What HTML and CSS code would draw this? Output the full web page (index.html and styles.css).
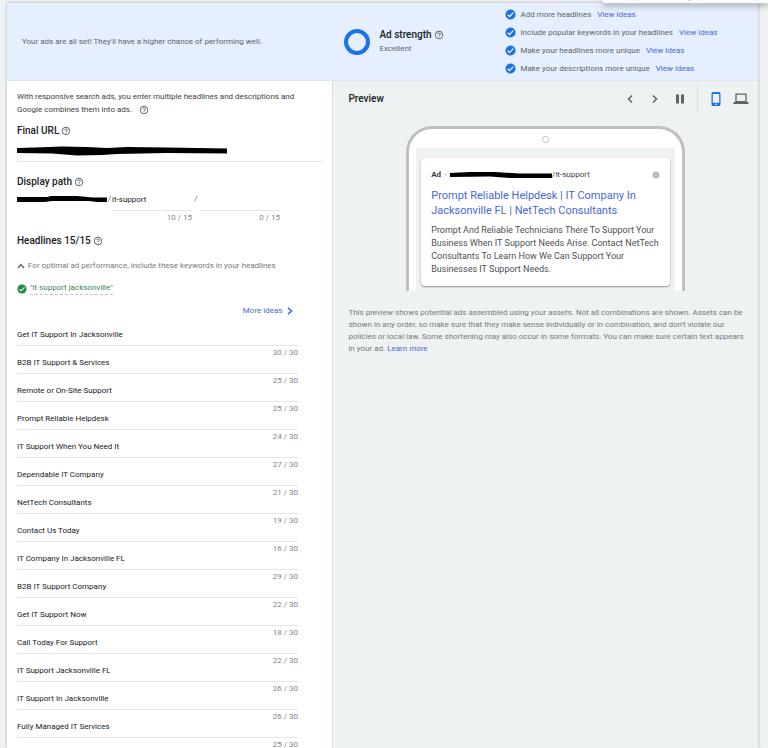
FILE: index.html
```
<!DOCTYPE html>
<html lang="en">
  <head>
    <meta charset="utf-8">
    <title>Responsive search ad</title>
    <link rel="stylesheet" href="styles.css">
  </head>
  <body>

<!-- shared icons -->
<svg class="sprite" width="0" height="0" aria-hidden="true">
  <symbol id="help" viewBox="0 0 24 24"><path fill="currentColor" d="M11 18h2v-2h-2v2zm1-16C6.480 2 2 6.480 2 12s4.480 10 10 10 10-4.480 10-10S17.520 2 12 2zm0 18c-4.410 0-8-3.590-8-8s3.590-8 8-8 8 3.590 8 8-3.590 8-8 8zm0-14c-2.210 0-4 1.790-4 4h2c0-1.100.9-2 2-2s2 .9 2 2c0 2-3 1.750-3 5h2c0-2.250 3-2.500 3-5 0-2.210-1.790-4-4-4z"/></symbol>
  <symbol id="check" viewBox="0 0 24 24"><circle cx="12" cy="12" r="11" fill="currentColor"/><path d="M6 12.500l4 4 8-8.500" fill="none" stroke="#fff" stroke-width="2.500"/></symbol>
</svg>

<div class="popup"><span class="popup-mark"></span></div>

<div class="editor">
  <header class="strength">
    <p class="strength-message">Your ads are all set! They'll have a higher chance of performing well.</p>
    <div class="strength-detail">
      <div class="meter">
        <svg class="ring" viewBox="0 0 28 28"><circle cx="14" cy="14" r="11" fill="none" stroke="#1a73e8" stroke-width="4"/></svg>
        <div>
          <h2 class="title">Ad strength <svg class="help"><use href="#help"/></svg></h2>
          <p class="rating">Excellent</p>
        </div>
      </div>
      <ul class="checklist">
        <li><svg class="check"><use href="#check"/></svg>Add more headlines <a href="#">View ideas</a></li>
        <li><svg class="check"><use href="#check"/></svg>Include popular keywords in your headlines <a href="#">View ideas</a></li>
        <li><svg class="check"><use href="#check"/></svg>Make your headlines more unique <a href="#">View ideas</a></li>
        <li><svg class="check"><use href="#check"/></svg>Make your descriptions more unique <a href="#">View ideas</a></li>
      </ul>
    </div>
  </header>

  <div class="columns">
    <form class="assets">
      <p class="intro">With responsive search ads, you enter multiple headlines and descriptions and Google combines them into ads. <svg class="help"><use href="#help"/></svg></p>

      <h2 class="title">Final URL <svg class="help"><use href="#help"/></svg></h2>
      <div class="final-url">
        <svg class="url-mark" viewBox="0 0 210 10" role="img" aria-label="Hidden URL"><path d="M0 2L18 1.500 45 0.500 70 1 90 2 110 1 150 1.500 180 2 210 2.500V7.500L150 7 100 8 85 9 60 9.500 35 7.500 0 7z"/></svg>
      </div>

      <h2 class="title">Display path <svg class="help"><use href="#help"/></svg></h2>
      <div class="path">
        <svg class="path-mark" viewBox="0 0 90 8" role="img" aria-label="Hidden domain"><path d="M0 2L30 2 34 1 60 1 76 2.500 90 2.500V7L80 7 72 6 35 6 28 7H0z"/></svg>
        <span class="slash">/</span>
        <div class="path-field">
          <input type="text" value="it-support" aria-label="Path 1">
          <span class="count">10 / 15</span>
        </div>
        <span class="slash">/</span>
        <div class="path-field">
          <input type="text" value="" aria-label="Path 2">
          <span class="count">0 / 15</span>
        </div>
      </div>

      <h2 class="title">Headlines 15/15 <svg class="help"><use href="#help"/></svg></h2>
      <button type="button" class="keywords-toggle">
        <svg class="caret" viewBox="0 0 8 6"><path d="M1 5l3-3.500L7 5" fill="none" stroke="#5f6368" stroke-width="1.300"/></svg>
        For optimal ad performance, include these keywords in your headlines
      </button>
      <div class="keyword"><svg class="check"><use href="#check"/></svg><span>"it support jacksonville"</span></div>
      <a class="more-ideas" href="#">More ideas
        <svg viewBox="0 0 6 8"><path d="M1 .8L4.500 4 1 7.200" fill="none" stroke="#4272db" stroke-width="1.600"/></svg>
      </a>

      <div class="headlines">
        <div class="headline"><input type="text" aria-label="Headline 1" value="Get IT Support In Jacksonville"><span class="count">30 / 30</span></div>
        <div class="headline"><input type="text" aria-label="Headline 2" value="B2B IT Support &amp; Services"><span class="count">25 / 30</span></div>
        <div class="headline"><input type="text" aria-label="Headline 3" value="Remote or On-Site Support"><span class="count">25 / 30</span></div>
        <div class="headline"><input type="text" aria-label="Headline 4" value="Prompt Reliable Helpdesk"><span class="count">24 / 30</span></div>
        <div class="headline"><input type="text" aria-label="Headline 5" value="IT Support When You Need It"><span class="count">27 / 30</span></div>
        <div class="headline"><input type="text" aria-label="Headline 6" value="Dependable IT Company"><span class="count">21 / 30</span></div>
        <div class="headline"><input type="text" aria-label="Headline 7" value="NetTech Consultants"><span class="count">19 / 30</span></div>
        <div class="headline"><input type="text" aria-label="Headline 8" value="Contact Us Today"><span class="count">16 / 30</span></div>
        <div class="headline"><input type="text" aria-label="Headline 9" value="IT Company In Jacksonville FL"><span class="count">29 / 30</span></div>
        <div class="headline"><input type="text" aria-label="Headline 10" value="B2B IT Support Company"><span class="count">22 / 30</span></div>
        <div class="headline"><input type="text" aria-label="Headline 11" value="Get IT Support Now"><span class="count">18 / 30</span></div>
        <div class="headline"><input type="text" aria-label="Headline 12" value="Call Today For Support"><span class="count">22 / 30</span></div>
        <div class="headline"><input type="text" aria-label="Headline 13" value="IT Support Jacksonville FL"><span class="count">26 / 30</span></div>
        <div class="headline"><input type="text" aria-label="Headline 14" value="IT Support In Jacksonville"><span class="count">26 / 30</span></div>
        <div class="headline"><input type="text" aria-label="Headline 15" value="Fully Managed IT Services"><span class="count">25 / 30</span></div>
      </div>
    </form>

    <section class="preview">
      <div class="preview-bar">
        <h2 class="title">Preview</h2>
        <div class="controls">
          <button type="button" aria-label="Previous"><svg viewBox="0 0 16 16"><path d="M10 4.500L6.500 8l3.500 3.500" fill="none" stroke="currentColor" stroke-width="1.500"/></svg></button>
          <button type="button" aria-label="Next"><svg viewBox="0 0 16 16"><path d="M6 4.500L9.500 8 6 11.500" fill="none" stroke="currentColor" stroke-width="1.500"/></svg></button>
          <button type="button" aria-label="Pause"><svg viewBox="0 0 16 16"><path d="M4 3.500h3v9H4zM9 3.500h3v9H9z" fill="currentColor"/></svg></button>
        </div>
        <div class="devices">
          <button type="button" class="active" aria-label="Mobile"><svg viewBox="0 0 16 16"><path fill="currentColor" fill-rule="evenodd" d="M5 1h6a1.500 1.500 0 0 1 1.500 1.500v11A1.500 1.500 0 0 1 11 15H5a1.500 1.500 0 0 1-1.500-1.500v-11A1.500 1.500 0 0 1 5 1zM4.800 3v8.800h6.400V3z"/><path d="M7 13.300h2" stroke="#fff" stroke-width=".8"/></svg></button>
          <button type="button" aria-label="Desktop"><svg viewBox="0 0 16 16"><path d="M3 3.200h10v7.500H3z" fill="none" stroke="currentColor" stroke-width="1.300"/><path d="M.5 11h15v2H.5z" fill="currentColor"/></svg></button>
        </div>
      </div>

      <div class="phone">
        <span class="camera"></span>
        <div class="screen">
          <article class="ad">
            <div class="ad-url">
              <b>Ad</b><span class="dot">·</span>
              <svg class="ad-mark" viewBox="0 0 102 8" role="img" aria-label="Hidden domain"><path d="M0 2L20 1 45 1 70 2.500 102 2.500V7L60 7 40 5.500 0 6z"/></svg>
              <span>/it-support</span>
              <svg class="info" viewBox="0 0 8 8"><circle cx="4" cy="4" r="3.500" fill="#b8babd"/><path d="M4 2v.8M4 3.500V6" stroke="#d5d7d9" stroke-width=".8"/></svg>
            </div>
            <a class="ad-title" href="#">Prompt Reliable Helpdesk | IT Company In Jacksonville FL | NetTech Consultants</a>
            <p class="ad-text">Prompt And Reliable Technicians There To Support Your Business When IT Support Needs Arise. Contact NetTech Consultants To Learn How We Can Support Your Businesses IT Support Needs.</p>
          </article>
        </div>
      </div>

      <p class="disclaimer">This preview shows potential ads assembled using your assets. Not all combinations are shown. Assets can be shown in any order, so make sure that they make sense individually or in combination, and don't violate our policies or local law. Some shortening may also occur in some formats. You can make sure certain text appears in your ad. <a href="#">Learn more</a></p>
    </section>
  </div>
</div>

  </body>
</html>
```
FILE: styles.css
```
* { box-sizing: border-box; }

body {
	margin: 0;
	height: 100vh;
	overflow: hidden;
	padding: 3px 10px 0 7px;
	font-family: Roboto, Arial, sans-serif;
	font-size: 8px;
	line-height: 12px;
	background: #eef2f3;
	color: #3c4043;
}

h2, p, ul { margin: 0; padding: 0; }
a { color: #4668d6; text-decoration: none; }
svg { display: block; flex: none; }
.sprite { position: absolute; }

button {
	border: none;
	padding: 0;
	background: none;
	font: inherit;
	color: #5f6368;
}

input {
	display: block;
	width: 100%;
	height: 18px;
	border: none;
	border-bottom: 1px solid #e4e6e8;
	padding: 0 0 5px;
	background: none;
	font: inherit;
	color: #202124;
	outline: none;
}

.title {
	display: flex;
	align-items: center;
	gap: 2px;
	font-size: 10px;
	font-weight: 500;
	line-height: 14px;
	color: #202124;
}

.help { width: 10px; height: 10px; color: #5f6368; }
.check { width: 11px; height: 11px; color: #1a73e8; }
.count { color: #80868b; }

/* menu edge that hangs over the top right corner */
.popup {
	position: absolute;
	top: 0;
	right: 0;
	width: 166px;
	height: 3px;
	border-radius: 0 0 0 3px;
	background: #fff;
	box-shadow: 0 2px 6px rgba(0, 0, 0, 0.5);
}
.popup-mark { display: block; width: 3px; height: 1px; margin-left: 86px; background: #f8c9a8; }

.editor { min-height: 100%; display: flex; flex-direction: column; box-shadow: 0 0 3px rgba(0, 0, 0, 0.3); }

.strength {
	display: grid;
	grid-template-columns: 13fr 17fr;
	align-items: center;
	height: 78px;
	background: #e5efff;
	border-bottom: 1px solid #dfe5ec;
	color: #5f6368;
}
.strength-message { padding-left: 15px; }
.strength-detail { display: flex; align-items: center; padding-left: 11px; }
.meter { display: flex; align-items: center; gap: 8px; width: 162px; }
.ring { width: 28px; height: 28px; }
.rating { line-height: 13px; }
.checklist { list-style: none; white-space: nowrap; }
.checklist li { display: flex; align-items: center; height: 18px; }
.checklist .check { margin-right: 4px; }
.checklist a { margin-left: 6px; }

.columns { display: grid; grid-template-columns: 13fr 17fr; flex: 1; }

.assets { background: #fff; padding: 9px 10px 0; }
.intro { margin-bottom: 8px; padding-right: 18px; line-height: 13px; }
.intro .help { display: inline-block; vertical-align: middle; margin-left: 5px; }

.final-url { padding: 8px 0 5px; margin-bottom: 13px; border-bottom: 1px solid #e4e6e8; }
.url-mark { width: 210px; height: 10px; }

.path { display: flex; margin: 4px 0 9px; }
.path-mark { width: 90px; height: 8px; margin-top: 2px; }
.path .slash { width: 5px; text-align: center; color: #5f6368; }
.path-field { width: 80px; }
.path-field + .slash { width: 8px; }
.path-field .count { display: block; line-height: 14px; text-align: right; }

.keywords-toggle { display: flex; align-items: center; gap: 3px; margin: 12px 0 10px; color: #757a7e; }
.caret { width: 8px; height: 6px; }

.keyword { display: flex; align-items: center; gap: 3px; color: #3c8458; }
.keyword .check { width: 10px; height: 10px; color: #1e8e3e; }
.keyword span { border-bottom: 1px dashed #c4c8cb; }

.more-ideas { display: flex; align-items: center; justify-content: flex-end; gap: 5px; margin: 10px 29px 11px 0; }
.more-ideas svg { width: 6px; height: 8px; }

.headlines { width: 281px; }
.headline { display: flex; flex-direction: column; }
.headline .count { height: 10px; line-height: 14px; text-align: right; }

.preview { border-left: 1px solid #dcdfe1; padding: 0 15px; }
.preview-bar { display: flex; align-items: center; height: 35px; }
.controls { display: flex; gap: 9px; margin-left: auto; padding-right: 9px; }
.controls svg, .devices svg { width: 16px; height: 16px; }
.devices { display: flex; gap: 9px; margin-right: -6px; padding: 5px 0 5px 10px; border-left: 1px solid #dadce0; }
.devices .active { color: #1a73e8; }

.phone {
	width: 279px;
	margin: 10px auto 16px;
	padding: 0 7px;
	border: 3px solid #bdc1c6;
	border-bottom: none;
	border-radius: 26px 26px 0 0;
	background: #fff;
}
.camera { display: block; width: 7px; height: 7px; margin: 0 auto; border: 1px solid #bdc1c6; border-radius: 50%; position: relative; top: 7px; }
.screen { margin-top: 12px; padding: 10px 5px 5px; background: #eef2f3; }
.ad { padding: 11px 10px 10px; border-radius: 4px; background: #fff; box-shadow: 0 1px 2px rgba(0, 0, 0, 0.4); }
.ad-url { display: flex; align-items: center; }
.dot { width: 9px; text-align: center; }
.ad-mark { width: 102px; height: 8px; }
.info { width: 8px; height: 8px; margin-left: auto; }
.ad-title { display: block; margin: 7px 0 6px; font-size: 11px; line-height: 15px; }
.ad-text { font-size: 9px; line-height: 13px; color: #4d5156; }

.disclaimer { margin-right: -6px; color: #757a7e; }
```
